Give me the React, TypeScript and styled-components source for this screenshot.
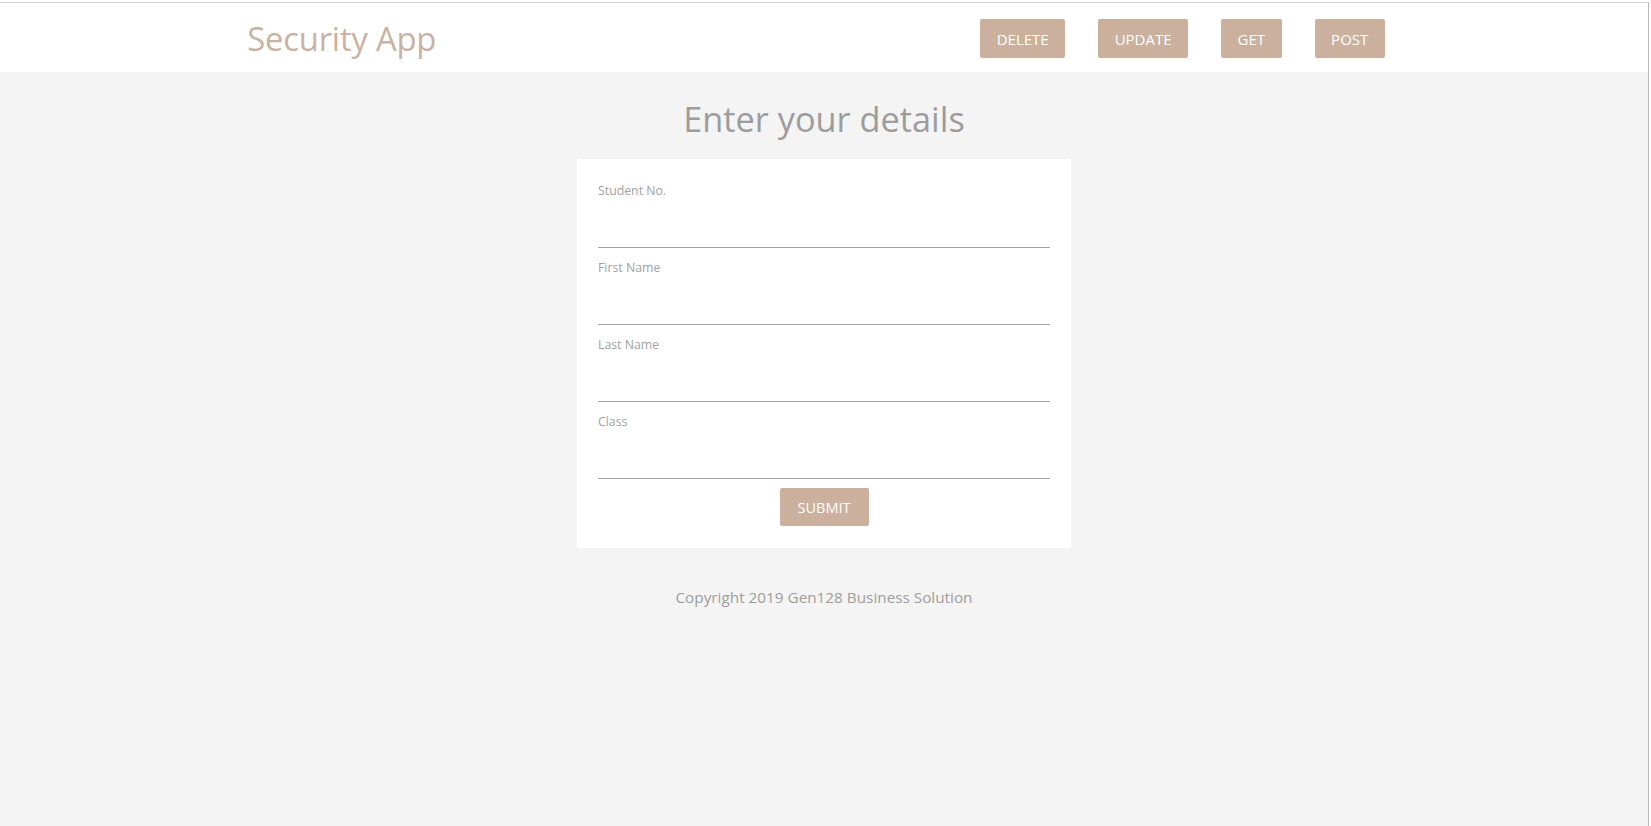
import React, { useState } from 'react';
import styled, { createGlobalStyle } from 'styled-components';

const GlobalStyle = createGlobalStyle`
  html, body {
    margin: 0;
    padding: 0;
    background: #ffffff;
  }
  body {
    font-family: "Open Sans", "Noto Sans", "Liberation Sans", sans-serif;
  }
  * {
    box-sizing: border-box;
  }
`;

const accent = '#cab09d';

interface Field {
  name: string;
  label: string;
}

const fields: Field[] = [
  { name: 'studentNo', label: 'Student No.' },
  { name: 'firstName', label: 'First Name' },
  { name: 'lastName', label: 'Last Name' },
  { name: 'className', label: 'Class' },
];

const actions = ['DELETE', 'UPDATE', 'GET', 'POST'];

const App: React.FC = () => {
  const [values, setValues] = useState<Record<string, string>>({});

  const handleChange = (name: string, value: string) => {
    setValues((prev) => ({ ...prev, [name]: value }));
  };

  return (
    <>
      <GlobalStyle />
      <Frame>
        <Window>
          <Header>
            <HeaderInner>
              <Brand>Security App</Brand>
              <Nav>
                {actions.map((action) => (
                  <NavButton key={action} type="button">
                    {action}
                  </NavButton>
                ))}
              </Nav>
            </HeaderInner>
          </Header>

          <Main>
            <PageTitle>Enter your details</PageTitle>
            <FormCard onSubmit={(e) => e.preventDefault()}>
              {fields.map((field) => (
                <FieldGroup key={field.name}>
                  <Label htmlFor={field.name}>{field.label}</Label>
                  <Input
                    id={field.name}
                    value={values[field.name] || ''}
                    onChange={(e) => handleChange(field.name, e.target.value)}
                  />
                </FieldGroup>
              ))}
              <SubmitRow>
                <SubmitButton type="submit">SUBMIT</SubmitButton>
              </SubmitRow>
            </FormCard>
            <Footer>Copyright 2019 Gen128 Business Solution</Footer>
          </Main>
        </Window>
      </Frame>
    </>
  );
};

// Styled Components
const Frame = styled.div`
  padding-top: 2px;
  background: #ffffff;
`;

const Window = styled.div`
  width: 1649px;
  min-height: 824px;
  border-top: 1px solid #d4d4d4;
  border-right: 1px solid #b8b8b8;
  background: #f4f4f4;
  display: flex;
  flex-direction: column;
`;

const Header = styled.header`
  height: 69px;
  padding-top: 2px;
  background: #ffffff;
  display: flex;
  align-items: center;
`;

const HeaderInner = styled.div`
  width: 70%;
  margin: 0 auto;
  padding-right: 16px;
  display: flex;
  align-items: center;
  justify-content: space-between;
`;

const Brand = styled.h1`
  margin: 0;
  font-size: 32.8px;
  font-weight: 400;
  color: #c9b2a3;
  letter-spacing: -0.2px;
`;

const Nav = styled.nav`
  display: flex;
  align-items: center;
  gap: 33px;
`;

const NavButton = styled.button`
  height: 39px;
  padding: 0 16.5px;
  border: none;
  border-radius: 2px;
  background: ${accent};
  color: #ffffff;
  font-family: inherit;
  font-size: 15px;
  cursor: pointer;
`;

const Main = styled.main`
  display: flex;
  flex-direction: column;
  align-items: center;
`;

const PageTitle = styled.h2`
  margin: 26px 0 20px;
  font-size: 34.3px;
  line-height: 41px;
  font-weight: 400;
  color: #9c9c9c;
`;

const FormCard = styled.form`
  width: 494px;
  background: #ffffff;
  padding: 12px 21px 22px;
  display: flex;
  flex-direction: column;
`;

const FieldGroup = styled.div`
  display: flex;
  flex-direction: column;
  margin-top: 10px;
`;

const Label = styled.label`
  font-size: 12.3px;
  line-height: 20px;
  color: #a2a2a2;
`;

const Input = styled.input`
  height: 47px;
  border: none;
  border-bottom: 1px solid #a3a3a3;
  outline: none;
  background: transparent;
  font-family: inherit;
  font-size: 14px;
  color: #666;
  padding: 0;
`;

const SubmitRow = styled.div`
  display: flex;
  justify-content: center;
  margin-top: 9px;
`;

const SubmitButton = styled.button`
  width: 89px;
  height: 38px;
  border: none;
  border-radius: 2px;
  background: ${accent};
  color: #ffffff;
  font-family: inherit;
  font-size: 14.5px;
  cursor: pointer;
`;

const Footer = styled.footer`
  margin-top: 37px;
  font-size: 15.3px;
  line-height: 24px;
  color: #9d9d9d;
`;

export default App;
